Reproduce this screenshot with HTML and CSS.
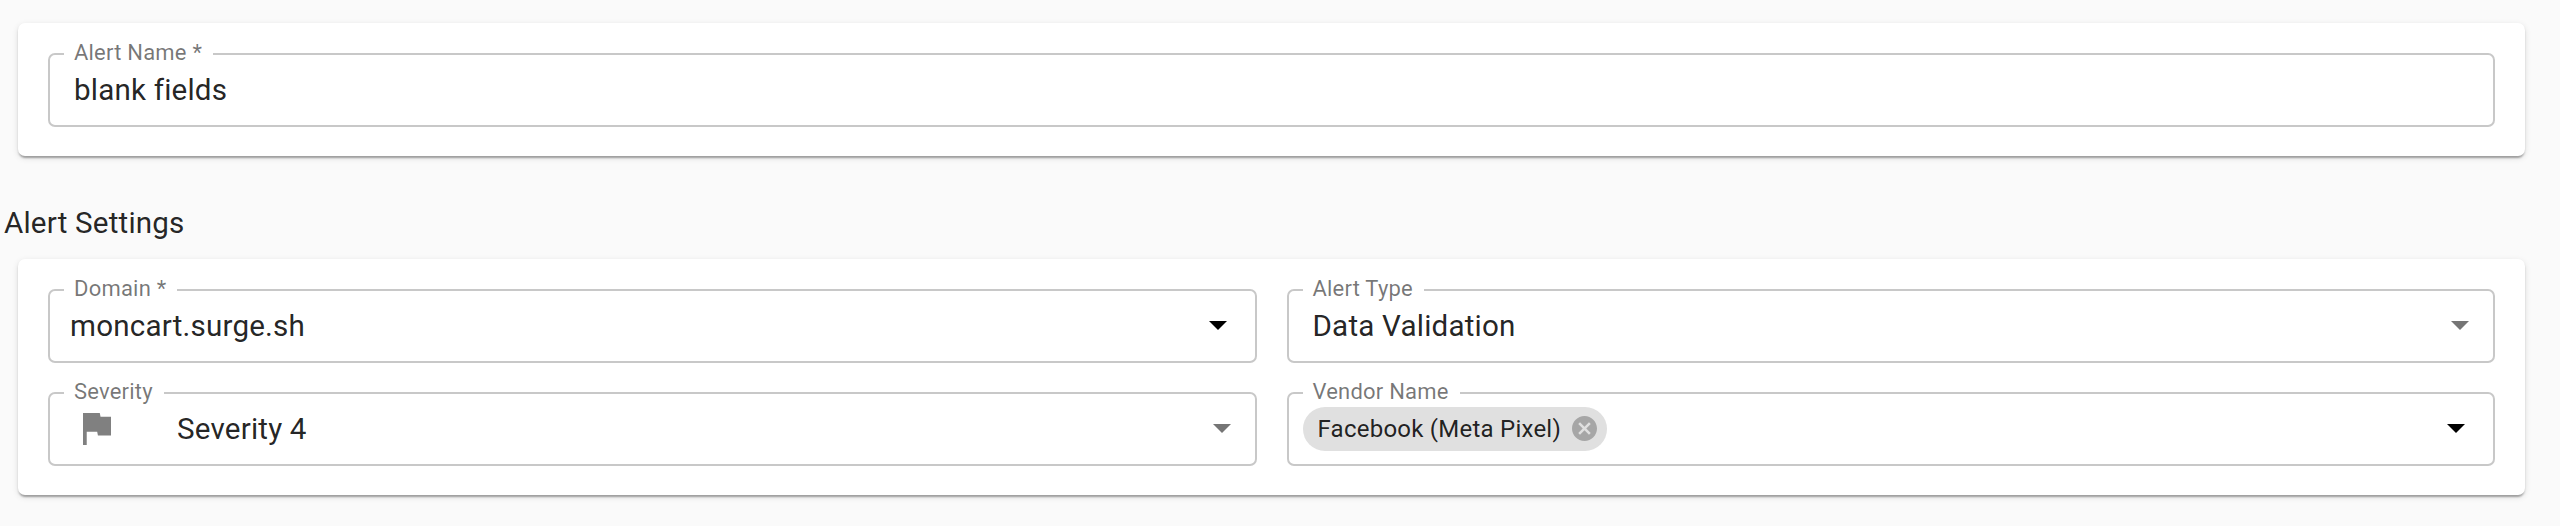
FILE: index.html
```html
<!DOCTYPE html>
<html lang="en">
<head>
<meta charset="utf-8">
<title>Alert Settings</title>
<link rel="stylesheet" href="styles.css">
</head>
<body>
<main class="page">
  <section class="card">
    <div class="field">
      <label class="label">Alert Name *</label>
      <span class="value">blank fields</span>
    </div>
  </section>
  <h2 class="heading">Alert Settings</h2>
  <section class="card grid">
    <div class="field">
      <label class="label">Domain *</label>
      <span class="value value-domain">moncart.surge.sh</span>
      <svg class="arrow arrow-dark" viewBox="0 0 18 9"><path d="M0 0h18L9 9z"/></svg>
    </div>
    <div class="field">
      <label class="label">Alert Type</label>
      <span class="value">Data Validation</span>
      <svg class="arrow" viewBox="0 0 18 9"><path d="M0 0h18L9 9z"/></svg>
    </div>
    <div class="field">
      <label class="label">Severity</label>
      <svg class="flag" viewBox="5 4 15 17" preserveAspectRatio="none"><path d="M14.400 6 14 4H5v17h2v-7h5.600l.4 2h7V6z"/></svg>
      <span class="value">Severity 4</span>
      <svg class="arrow" viewBox="0 0 18 9"><path d="M0 0h18L9 9z"/></svg>
    </div>
    <div class="field">
      <label class="label">Vendor Name</label>
      <span class="chip">
        <span class="chip-text">Facebook (Meta Pixel)</span>
        <svg class="chip-close" viewBox="2 2 20 20"><path d="M12 2C6.470 2 2 6.470 2 12s4.470 10 10 10 10-4.470 10-10S17.530 2 12 2zm5 13.590L15.590 17 12 13.410 8.410 17 7 15.590 10.590 12 7 8.410 8.410 7 12 10.590 15.590 7 17 8.410 13.410 12 17 15.590z"/></svg>
      </span>
      <svg class="arrow arrow-dark" viewBox="0 0 18 9"><path d="M0 0h18L9 9z"/></svg>
    </div>
  </section>
</main>
</body>
</html>
```
FILE: styles.css
```css
* { box-sizing: border-box; }
body {
  margin: 0;
  background: #fafafa;
  color: rgba(0, 0, 0, 0.87);
  font-family: Roboto, "Liberation Sans", sans-serif;
}
.page { height: 526px; padding: 23px 35px 0 18px; overflow: hidden; }
.card {
  padding: 30px 30px 29px;
  background: #fff;
  border-radius: 7px;
  box-shadow: 0 4px 2px -2px rgba(0, 0, 0, 0.2), 0 2px 2px 0 rgba(0, 0, 0, 0.14), 0 2px 6px 0 rgba(0, 0, 0, 0.12);
}
.grid {
  display: grid;
  grid-template-columns: 1fr 1fr;
  column-gap: 30px;
  row-gap: 29px;
}
.field {
  position: relative;
  display: flex;
  align-items: center;
  height: 74px;
  padding: 0 24px 1px;
  border: 2px solid #c8c8c8;
  border-radius: 7px;
}
.label {
  position: absolute;
  top: -16px;
  left: 14px;
  padding: 0 11px 0 10px;
  background: #fff;
  color: rgba(0, 0, 0, 0.54);
  font-size: 22px;
  line-height: 28px;
  letter-spacing: 0.210px;
  white-space: nowrap;
}
.value { font-size: 29.600px; line-height: 36px; letter-spacing: 0.190px; }
.value-domain { margin-left: -4px; }
.heading {
  margin: 0 0 0 -14px;
  padding: 49px 0 18px;
  font-size: 29.600px;
  font-weight: 400;
  line-height: 36px;
  letter-spacing: 0.180px;
}
.arrow { width: 18px; height: 9px; margin-left: auto; fill: #757575; }
.arrow-dark { margin-right: 4px; fill: #000; }
.flag { width: 28px; height: 32px; margin: 0 66px 0 9px; fill: #808080; }
.chip {
  display: flex;
  align-items: center;
  gap: 11px;
  height: 44px;
  margin-left: -10px;
  padding: 0 10px 0 15px;
  border-radius: 22px;
  background: #e0e0e0;
}
.chip-text { font-size: 24px; letter-spacing: 0.240px; }
.chip-close { width: 25px; height: 25px; fill: #a6a6a6; }
```
